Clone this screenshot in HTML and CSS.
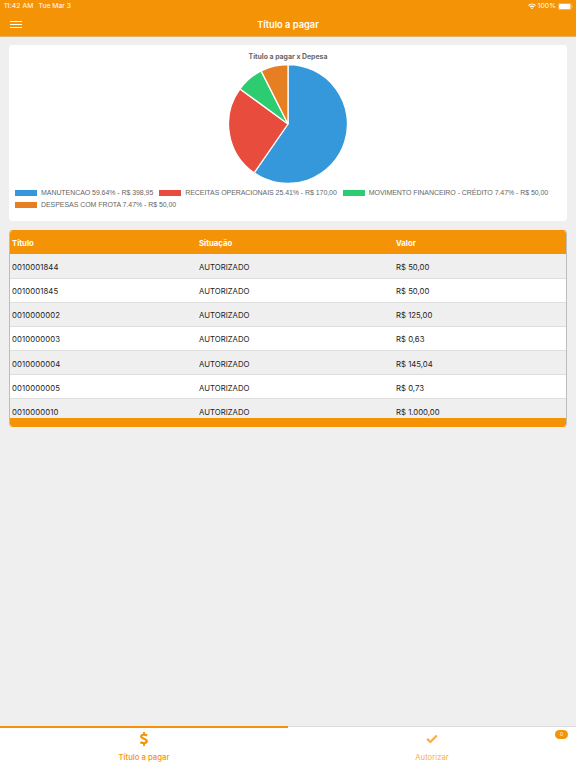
FILE: index.html
```html
<!DOCTYPE html>
<html lang="pt-BR">
<head>
    <meta charset="UTF-8">
    <meta name="viewport" content="width=device-width, initial-scale=1.0">
    <title>Título a pagar</title>
    <link rel="stylesheet" href="styles.css">
</head>
<body>
    <header class="header">
        <div class="status-bar">
            <span class="hora">11:42 AM</span>
            <span class="data">Tue Mar 3</span>
            <svg class="wifi" width="8" height="7" viewBox="0 0 8 7" fill="none" stroke="#fff" stroke-width="1.1">
                <path d="M0.5 2.5C2.5 0.5 5.5 0.5 7.5 2.5"/>
                <path d="M1.9 4C3.1 2.8 4.9 2.8 6.1 4"/>
                <path d="M2.9 5L4 6.3L5.1 5C4.5 4.5 3.5 4.5 2.9 5Z" fill="#fff" stroke="none"/>
            </svg>
            <span class="carga">100%</span>
            <svg class="bateria" width="15" height="7" viewBox="0 0 15 7">
                <rect x="0.3" y="0.3" width="12.9" height="6.4" rx="1.8" fill="none" stroke="#fff" stroke-width="0.6" opacity="0.6"/>
                <rect x="1.1" y="1.1" width="11.3" height="4.8" rx="1" fill="#fff"/>
                <path d="M14 2.3Q15 3.5 14 4.7Z" fill="#fff" opacity="0.6"/>
            </svg>
        </div>
        <div class="nav-bar">
            <button class="menu" aria-label="Menu"><i></i><i></i><i></i></button>
            <h1>Título a pagar</h1>
        </div>
    </header>

    <main class="content">
        <section class="card">
            <h2>Título a pagar x Depesa</h2>
            <svg class="pizza" width="120" height="120" viewBox="0 0 120 120" stroke="#fff" stroke-width="1.3" stroke-linejoin="bevel">
                <path fill="#3498db" d="M60 60V0.5A59.5 59.5 0 1 1 26.1 108.9Z"/>
                <path fill="#e74c3c" d="M60 60L26.1 108.9A59.5 59.5 0 0 1 12 24.9Z"/>
                <path fill="#2ecc71" d="M60 60L12 24.9A59.5 59.5 0 0 1 33.1 6.9Z"/>
                <path fill="#e67e22" d="M60 60L33.1 6.9A59.5 59.5 0 0 1 60 0.5Z"/>
            </svg>
            <ul class="legenda">
                <li><i class="azul"></i><span>MANUTENCAO 59.64% - R$ 398,95</span></li>
                <li><i class="vermelho"></i><span>RECEITAS OPERACIONAIS 25.41% - R$ 170,00</span></li>
                <li><i class="verde"></i><span>MOVIMENTO FINANCEIRO - CRÉDITO 7.47% - R$ 50,00</span></li>
                <li><i class="laranja"></i><span>DESPESAS COM FROTA 7.47% - R$ 50,00</span></li>
            </ul>
        </section>

        <section class="tabela">
            <div class="linha cabecalho"><span>Título</span><span>Situação</span><span>Valor</span></div>
            <div class="linhas">
                <div class="linha"><span class="codigo">0010001844</span><span>AUTORIZADO</span><span>R$ 50,00</span></div>
                <div class="linha"><span class="codigo">0010001845</span><span>AUTORIZADO</span><span>R$ 50,00</span></div>
                <div class="linha"><span class="codigo">0010000002</span><span>AUTORIZADO</span><span>R$ 125,00</span></div>
                <div class="linha"><span class="codigo">0010000003</span><span>AUTORIZADO</span><span>R$ 0,63</span></div>
                <div class="linha"><span class="codigo">0010000004</span><span>AUTORIZADO</span><span>R$ 145,04</span></div>
                <div class="linha"><span class="codigo">0010000005</span><span>AUTORIZADO</span><span>R$ 0,73</span></div>
                <div class="linha"><span class="codigo">0010000010</span><span>AUTORIZADO</span><span>R$ 1.000,00</span></div>
            </div>
            <div class="rodape"></div>
        </section>
    </main>

    <nav class="tabs">
        <a class="tab ativa">
            <svg width="10" height="14" viewBox="0 0 10 14" fill="none" stroke="#f59307" stroke-width="2.2">
                <path d="M8.2 3.4C5.8 2.4 2.2 2.2 2.2 4.6C2.2 7.2 7.8 6.2 7.8 9.1C7.8 11.7 3.8 11.4 1.3 10.2"/>
                <path d="M5 0V3M5 11V14" stroke-width="1.8"/>
            </svg>
            <span>Título a pagar</span>
        </a>
        <a class="tab">
            <svg width="12" height="14" viewBox="0 0 12 14" fill="none" stroke="#f59307" stroke-width="2.3">
                <path d="M1.2 6.9L4.4 10L10.9 3.5"/>
            </svg>
            <span>Autorizar</span>
            <b class="badge">0</b>
        </a>
    </nav>
</body>
</html>
```

FILE: styles.css
```css
* {
    box-sizing: border-box;
}

body {
    margin: 0;
    height: 100vh;
    display: flex;
    flex-direction: column;
    overflow: hidden;
    background-color: #efefef;
    font-family: Inter, "Liberation Sans", sans-serif;
}

.header {
    height: 37px;
    background-color: #f59307;
    border-bottom: 1px solid #e3b26b;
    color: #fff;
}

.status-bar {
    display: flex;
    align-items: center;
    height: 12px;
    padding: 0 3px 0 4px;
    font-size: 6.8px;
    line-height: 12px;
}

.hora {
    letter-spacing: 0.1px;
}

.data {
    margin-left: 5px;
}

.wifi {
    margin-left: auto;
}

.carga {
    margin: 0 2px 0 2px;
    letter-spacing: 0.1px;
}

.nav-bar {
    display: grid;
    grid-template-columns: 32px 1fr 32px;
    align-items: center;
    height: 24px;
}

.menu {
    display: flex;
    flex-direction: column;
    gap: 2px;
    margin-left: 10px;
    padding: 0;
    width: 12px;
    border: none;
    background: none;
}

.menu i {
    height: 1px;
    width: 12px;
    background-color: #fff;
}

h1 {
    margin: 0;
    text-align: center;
    font-size: 9.3px;
    font-weight: 600;
}

.content {
    flex: 1;
    padding: 8px 9px;
}

.card {
    height: 176px;
    padding: 7px 6px 0;
    border-radius: 3px;
    background-color: #fff;
}

h2 {
    margin: 0;
    height: 12px;
    line-height: 9px;
    text-align: center;
    font-size: 6.9px;
    font-weight: 700;
    color: #666;
}

.pizza {
    display: block;
    margin: 0 auto;
}

.legenda {
    display: flex;
    flex-wrap: wrap;
    column-gap: 6px;
    margin: 3px 0 0;
    padding: 0;
    list-style: none;
    font-family: "Liberation Sans", Arial, sans-serif;
    font-size: 7px;
    letter-spacing: -0.06px;
    line-height: 12.3px;
    color: #666;
}

.legenda li {
    display: flex;
    align-items: center;
    white-space: nowrap;
}

.legenda i {
    width: 22px;
    height: 6px;
    margin-right: 4px;
}

.azul { background-color: #3498db; }
.vermelho { background-color: #e74c3c; }
.verde { background-color: #2ecc71; }
.laranja { background-color: #e67e22; }

.tabela {
    display: flex;
    flex-direction: column;
    height: 197px;
    margin-top: 9px;
    border: 1px solid #bdbdbd;
    border-top-color: #f59307;
    border-bottom-color: #f59307;
    border-radius: 4px;
    overflow: hidden;
}

.linha {
    display: grid;
    grid-template-columns: 187px 197px 1fr;
    align-items: center;
    flex: none;
    height: 24.15px;
    padding: 2px 0 0 2px;
    border-bottom: 1px solid #dedede;
    background-color: #fff;
    font-size: 7.75px;
    color: #222;
}

.codigo {
    letter-spacing: 0.1px;
}

.linhas {
    height: 164px;
    padding-top: 0.5px;
    background-color: #efefef;
    overflow: hidden;
}

.linha:nth-child(odd) {
    background-color: #efefef;
}

.linha.cabecalho {
    height: 23px;
    padding-top: 0;
    border: none;
    background-color: #f59307;
    color: #fff;
    font-weight: 700;
}

.rodape {
    flex: 1;
    background-color: #f59307;
}

.tabs {
    display: flex;
    height: 42px;
    background-color: #fff;
}

.tab {
    position: relative;
    flex: 1;
    display: flex;
    flex-direction: column;
    align-items: center;
    padding-top: 5px;
    border-top: 1px solid #dcdcdc;
    color: #f59307;
    font-size: 7.75px;
    line-height: 10px;
}

.tab.ativa {
    padding-top: 4px;
    border-top: 2px solid #f59307;
    font-weight: 500;
}

.tab span {
    margin-top: 6px;
}

.tab:not(.ativa) > svg,
.tab:not(.ativa) > span {
    opacity: 0.75;
}

.badge {
    position: absolute;
    top: 3px;
    right: 8px;
    width: 13px;
    height: 9px;
    border-radius: 5px;
    background-color: #f59307;
    color: #fff;
    font-size: 5px;
    font-weight: 400;
    line-height: 9px;
    text-align: center;
}
```
